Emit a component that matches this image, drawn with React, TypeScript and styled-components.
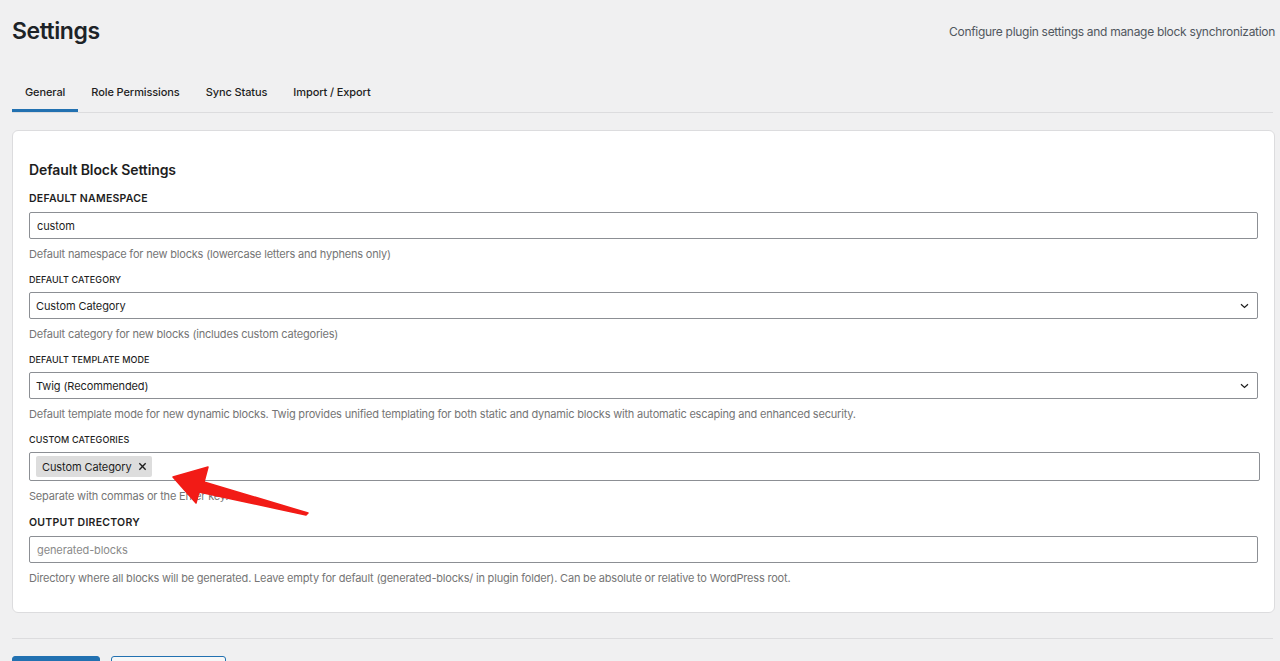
import React from "react";
import styled, { createGlobalStyle } from "styled-components";

const GlobalStyle = createGlobalStyle`
  html, body {
    margin: 0;
    padding: 0;
    background: #f0f0f1;
    font-family: Inter, "Noto Sans", sans-serif;
    color: #1e1e1e;
  }
  * { box-sizing: border-box; }
`;

const Page = styled.div`
  position: relative;
  padding: 0 5px 0 12px;
  height: 661px;
  overflow: hidden;
`;

const Header = styled.header`
  display: flex;
  justify-content: space-between;
  align-items: center;
  height: 62px;
`;

const Title = styled.h1`
  margin: 0;
  font-size: 23px;
  font-weight: 600;
  color: #1d2327;
  letter-spacing: -0.45px;
`;

const Subtitle = styled.p`
  margin: 0;
  font-size: 12px;
  color: #50575e;
  letter-spacing: -0.3px;
`;

const TabList = styled.nav`
  display: flex;
  margin-top: 10px;
  border-bottom: 1px solid #dcdcde;
  margin-right: 2px;
`;

const Tab = styled.button<{ $active?: boolean }>`
  height: 40px;
  padding: 0 13px;
  border: none;
  background: none;
  font-family: inherit;
  font-size: 11px;
  font-weight: 500;
  letter-spacing: -0.1px;
  color: #1e1e1e;
  box-shadow: ${(p) => (p.$active ? "inset 0 -3px 0 #2271b1" : "none")};
  cursor: pointer;
`;

const Card = styled.section`
  margin-top: 17px;
  background: #fff;
  border: 1px solid #dcdcde;
  border-radius: 6px;
  padding: 29px 16px 26px 16px;
`;

const CardTitle = styled.h2`
  margin: 0 0 11px;
  font-size: 14px;
  line-height: 20px;
  font-weight: 600;
  letter-spacing: -0.1px;
`;

const Field = styled.div`
  margin-bottom: 11px;
  &:last-child { margin-bottom: 0; }
`;

const Label = styled.label<{ $strong?: boolean }>`
  display: block;
  text-transform: uppercase;
  color: #1e1e1e;
  font-size: ${(p) => (p.$strong ? "10.5px" : "9px")};
  font-weight: ${(p) => (p.$strong ? 600 : 500)};
  line-height: ${(p) => (p.$strong ? "15px" : "13px")};
  margin-bottom: 6px;
  letter-spacing: ${(p) => (p.$strong ? "0.25px" : "0.1px")};
`;

const Input = styled.input`
  display: block;
  width: 100%;
  height: 27px;
  padding: 0 7px;
  border: 1px solid #8c8f94;
  border-radius: 2px;
  font-family: inherit;
  font-size: 11px;
  letter-spacing: -0.1px;
  color: #1e1e1e;
  background: #fff;
  &::placeholder { color: #8a8a8a; }
`;

const SelectBox = styled.div`
  display: flex;
  align-items: center;
  justify-content: space-between;
  height: 27px;
  padding: 0 8px 0 6px;
  border: 1px solid #8c8f94;
  border-radius: 2px;
  font-size: 11px;
  letter-spacing: -0.1px;
  background: #fff;
`;

const TokenField = styled.div`
  display: flex;
  align-items: center;
  height: 29px;
  padding: 0 6px;
  margin-right: -2px;
  border: 1px solid #8c8f94;
  border-radius: 2px;
  background: #fff;
`;

const Token = styled.span`
  display: inline-flex;
  align-items: center;
  gap: 6px;
  height: 21px;
  padding: 0 5px 0 6px;
  background: #dddddd;
  border-radius: 2px;
  font-size: 11px;
  letter-spacing: -0.1px;
  color: #1e1e1e;
`;

const Help = styled.p`
  margin: 7px 0 0;
  font-size: 11px;
  line-height: 16px;
  letter-spacing: -0.19px;
  color: #757575;
`;

const Divider = styled.hr`
  margin: 25px 2px 17px 0;
  border: none;
  border-top: 1px solid #dcdcde;
`;

const Actions = styled.div`
  display: flex;
  gap: 11px;
`;

const Button = styled.button<{ $primary?: boolean }>`
  height: 38px;
  padding: 0 12px;
  border-radius: 3px;
  font-family: inherit;
  font-size: 12px;
  border: 1px solid #2271b1;
  background: ${(p) => (p.$primary ? "#2271b1" : "#f6f7f7")};
  color: ${(p) => (p.$primary ? "#fff" : "#2271b1")};
  width: ${(p) => (p.$primary ? "88px" : "115px")};
`;

const Arrow = styled.svg`
  position: absolute;
  left: 0;
  top: 0;
  pointer-events: none;
`;

const Chevron = () => (
  <svg width="9" height="6" viewBox="0 0 9 6" fill="none">
    <path d="M1 1.2l3.5 3.3L8 1.2" stroke="#1e1e1e" strokeWidth="1.2" />
  </svg>
);

const CloseIcon = () => (
  <svg width="9" height="9" viewBox="0 0 10 10" fill="none">
    <path d="M1.5 1.5l7 7M8.5 1.5l-7 7" stroke="#1e1e1e" strokeWidth="1.5" />
  </svg>
);

const tabs = ["General", "Role Permissions", "Sync Status", "Import / Export"];

export default function App() {
  return (
    <>
      <GlobalStyle />
      <Page>
        <Header>
          <Title>Settings</Title>
          <Subtitle>Configure plugin settings and manage block synchronization</Subtitle>
        </Header>

        <TabList>
          {tabs.map((t, i) => (
            <Tab key={t} $active={i === 0}>
              {t}
            </Tab>
          ))}
        </TabList>

        <Card>
          <CardTitle>Default Block Settings</CardTitle>

          <Field>
            <Label $strong>Default Namespace</Label>
            <Input defaultValue="custom" />
            <Help>Default namespace for new blocks (lowercase letters and hyphens only)</Help>
          </Field>

          <Field>
            <Label>Default Category</Label>
            <SelectBox>
              <span>Custom Category</span>
              <Chevron />
            </SelectBox>
            <Help>Default category for new blocks (includes custom categories)</Help>
          </Field>

          <Field>
            <Label>Default Template Mode</Label>
            <SelectBox>
              <span>Twig (Recommended)</span>
              <Chevron />
            </SelectBox>
            <Help>
              Default template mode for new dynamic blocks. Twig provides unified templating for both
              static and dynamic blocks with automatic escaping and enhanced security.
            </Help>
          </Field>

          <Field>
            <Label>Custom Categories</Label>
            <TokenField>
              <Token>
                Custom Category
                <CloseIcon />
              </Token>
            </TokenField>
            <Help>Separate with commas or the Enter key.</Help>
          </Field>

          <Field>
            <Label $strong>Output Directory</Label>
            <Input placeholder="generated-blocks" />
            <Help>
              Directory where all blocks will be generated. Leave empty for default (generated-blocks/
              in plugin folder). Can be absolute or relative to WordPress root.
            </Help>
          </Field>
        </Card>

        <Divider />

        <Actions>
          <Button $primary>Save Settings</Button>
          <Button>Reset to Defaults</Button>
        </Actions>

        <Arrow width="1280" height="661" viewBox="0 0 1280 661">
          <path
            d="M173 477 L208 467 L204 482 L308 513 L306 515 L199 492 L196 503 Z"
            fill="#f21b16"
            stroke="#f21b16"
            strokeLinejoin="round"
            strokeWidth="1.5"
          />
        </Arrow>
      </Page>
    </>
  );
}
